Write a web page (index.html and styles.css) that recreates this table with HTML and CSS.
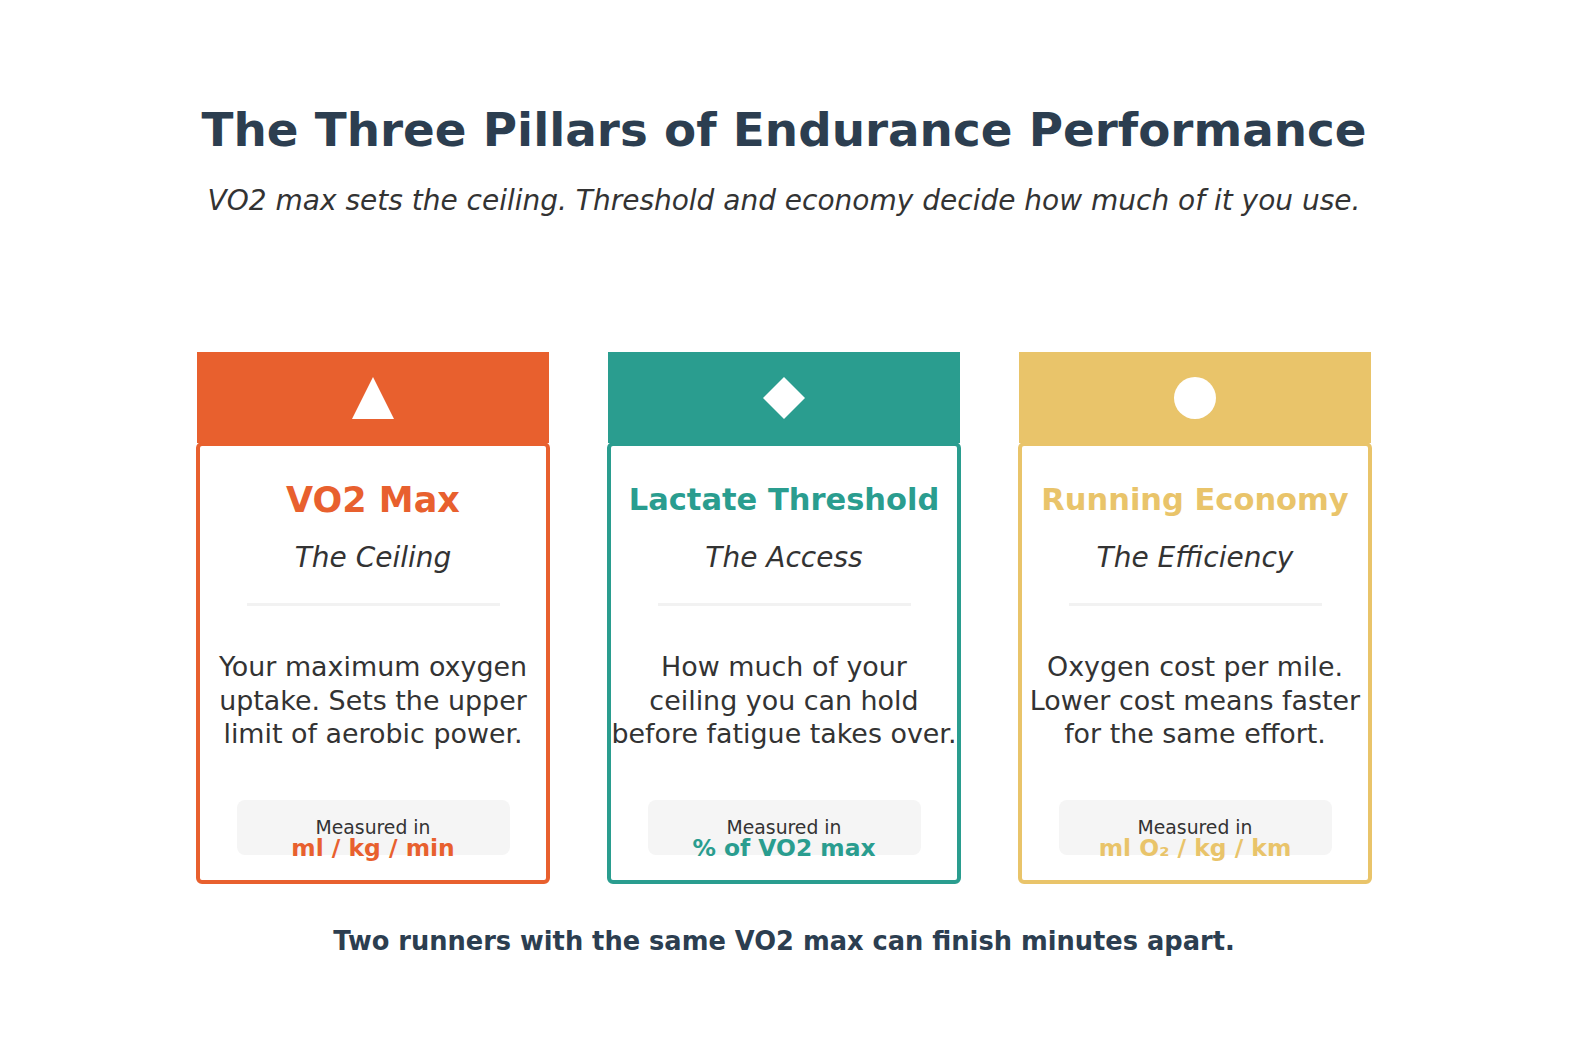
FILE: index.html
```html
<!DOCTYPE html>
<html lang="en">
<head>
<meta charset="utf-8">
<title>The Three Pillars of Endurance Performance</title>
<link rel="stylesheet" href="styles.css">
</head>
<body>
<div class="page">
  <h1 class="title">The Three Pillars of Endurance Performance</h1>
  <p class="subtitle">VO2 max sets the ceiling. Threshold and economy decide how much of it you use.</p>
  <div class="cards">
    <div class="card card-orange">
      <div class="card-head">
        <svg class="icon" width="44" height="44" viewBox="0 0 44 44"><polygon points="22,1 43,43 1,43" fill="#fff"/></svg>
      </div>
      <div class="card-body">
        <div class="card-title t-vo2">VO2 Max</div>
        <div class="card-sub">The Ceiling</div>
        <div class="divider"></div>
        <p class="card-text">Your maximum oxygen<br>uptake. Sets the upper<br>limit of aerobic power.</p>
        <div class="measure">
          <div class="measure-label">Measured in</div>
          <div class="measure-value">ml / kg / min</div>
        </div>
      </div>
    </div>
    <div class="card card-teal">
      <div class="card-head">
        <svg class="icon" width="44" height="44" viewBox="0 0 44 44"><polygon points="22,1 43,22 22,43 1,22" fill="#fff"/></svg>
      </div>
      <div class="card-body">
        <div class="card-title t-long">Lactate Threshold</div>
        <div class="card-sub">The Access</div>
        <div class="divider"></div>
        <p class="card-text">How much of your<br>ceiling you can hold<br>before fatigue takes over.</p>
        <div class="measure">
          <div class="measure-label">Measured in</div>
          <div class="measure-value">% of VO2 max</div>
        </div>
      </div>
    </div>
    <div class="card card-yellow">
      <div class="card-head">
        <svg class="icon" width="44" height="44" viewBox="0 0 44 44"><circle cx="22" cy="22" r="21" fill="#fff"/></svg>
      </div>
      <div class="card-body">
        <div class="card-title t-long">Running Economy</div>
        <div class="card-sub">The Efficiency</div>
        <div class="divider"></div>
        <p class="card-text">Oxygen cost per mile.<br>Lower cost means faster<br>for the same effort.</p>
        <div class="measure">
          <div class="measure-label">Measured in</div>
          <div class="measure-value">ml O₂ / kg / km</div>
        </div>
      </div>
    </div>
  </div>
  <p class="footer">Two runners with the same VO2 max can finish minutes apart.</p>
</div>
</body>
</html>
```
FILE: styles.css
```css
html, body {
  margin: 0;
  padding: 0;
  background: #ffffff;
}
body {
  font-family: "DejaVu Sans", "Liberation Sans", sans-serif;
  color: #333333;
}
.page {
  width: 1568px;
  padding-top: 102px;
  text-align: center;
}
.title {
  margin: 0;
  font-size: 46.8px;
  line-height: 56px;
  font-weight: bold;
  color: #2c3e50;
}
.subtitle {
  margin: 27px 0 0;
  font-size: 28px;
  line-height: 32px;
  font-style: italic;
  color: #333333;
}
.cards {
  margin-top: 135px;
  display: flex;
  justify-content: center;
  gap: 59px;
}
.card {
  width: 352px;
  display: flex;
  flex-direction: column;
}
.card-head {
  height: 91px;
  display: flex;
  align-items: center;
  justify-content: center;
}
.icon {
  display: block;
}
.card-body {
  height: 442px;
  box-sizing: border-box;
  margin: -1px -1px 0;
  border: 4px solid;
  border-radius: 6px;
  background: #ffffff;
  display: flex;
  flex-direction: column;
  align-items: center;
  padding-top: 34px;
}
.card-orange .card-head { background: #e8602e; }
.card-orange .card-body { border-color: #e8602e; }
.card-orange .card-title, .card-orange .measure-value { color: #e8602e; }
.card-teal .card-head { background: #2a9d8f; }
.card-teal .card-body { border-color: #2a9d8f; }
.card-teal .card-title, .card-teal .measure-value { color: #2a9d8f; }
.card-yellow .card-head { background: #e9c46a; }
.card-yellow .card-body { border-color: #e9c46a; }
.card-yellow .card-title, .card-yellow .measure-value { color: #e9c46a; }
.card-title {
  font-weight: bold;
  line-height: 40px;
  white-space: nowrap;
}
.t-vo2 { font-size: 35px; }
.t-long { font-size: 30.5px; }
.card-sub {
  margin-top: 21px;
  font-size: 28px;
  line-height: 34px;
  font-style: italic;
  color: #333333;
}
.divider {
  margin-top: 28px;
  width: 253px;
  height: 3px;
  background: #f2f2f2;
}
.card-text {
  margin: 44px -6px 0;
  font-size: 26.9px;
  line-height: 33.5px;
  color: #333333;
  white-space: nowrap;
}
.measure {
  margin-top: 49px;
  width: 273px;
  height: 55px;
  box-sizing: border-box;
  padding-top: 17px;
  background: #f5f5f5;
  border-radius: 8px;
}
.measure-label {
  font-size: 18.8px;
  line-height: 19px;
  padding-top: 1px;
  color: #333333;
}
.measure-value {
  font-size: 23.4px;
  line-height: 22px;
  font-weight: bold;
}
.footer {
  margin: 42px 0 0;
  font-size: 25.7px;
  line-height: 30px;
  font-weight: bold;
  color: #2c3e50;
}
```
